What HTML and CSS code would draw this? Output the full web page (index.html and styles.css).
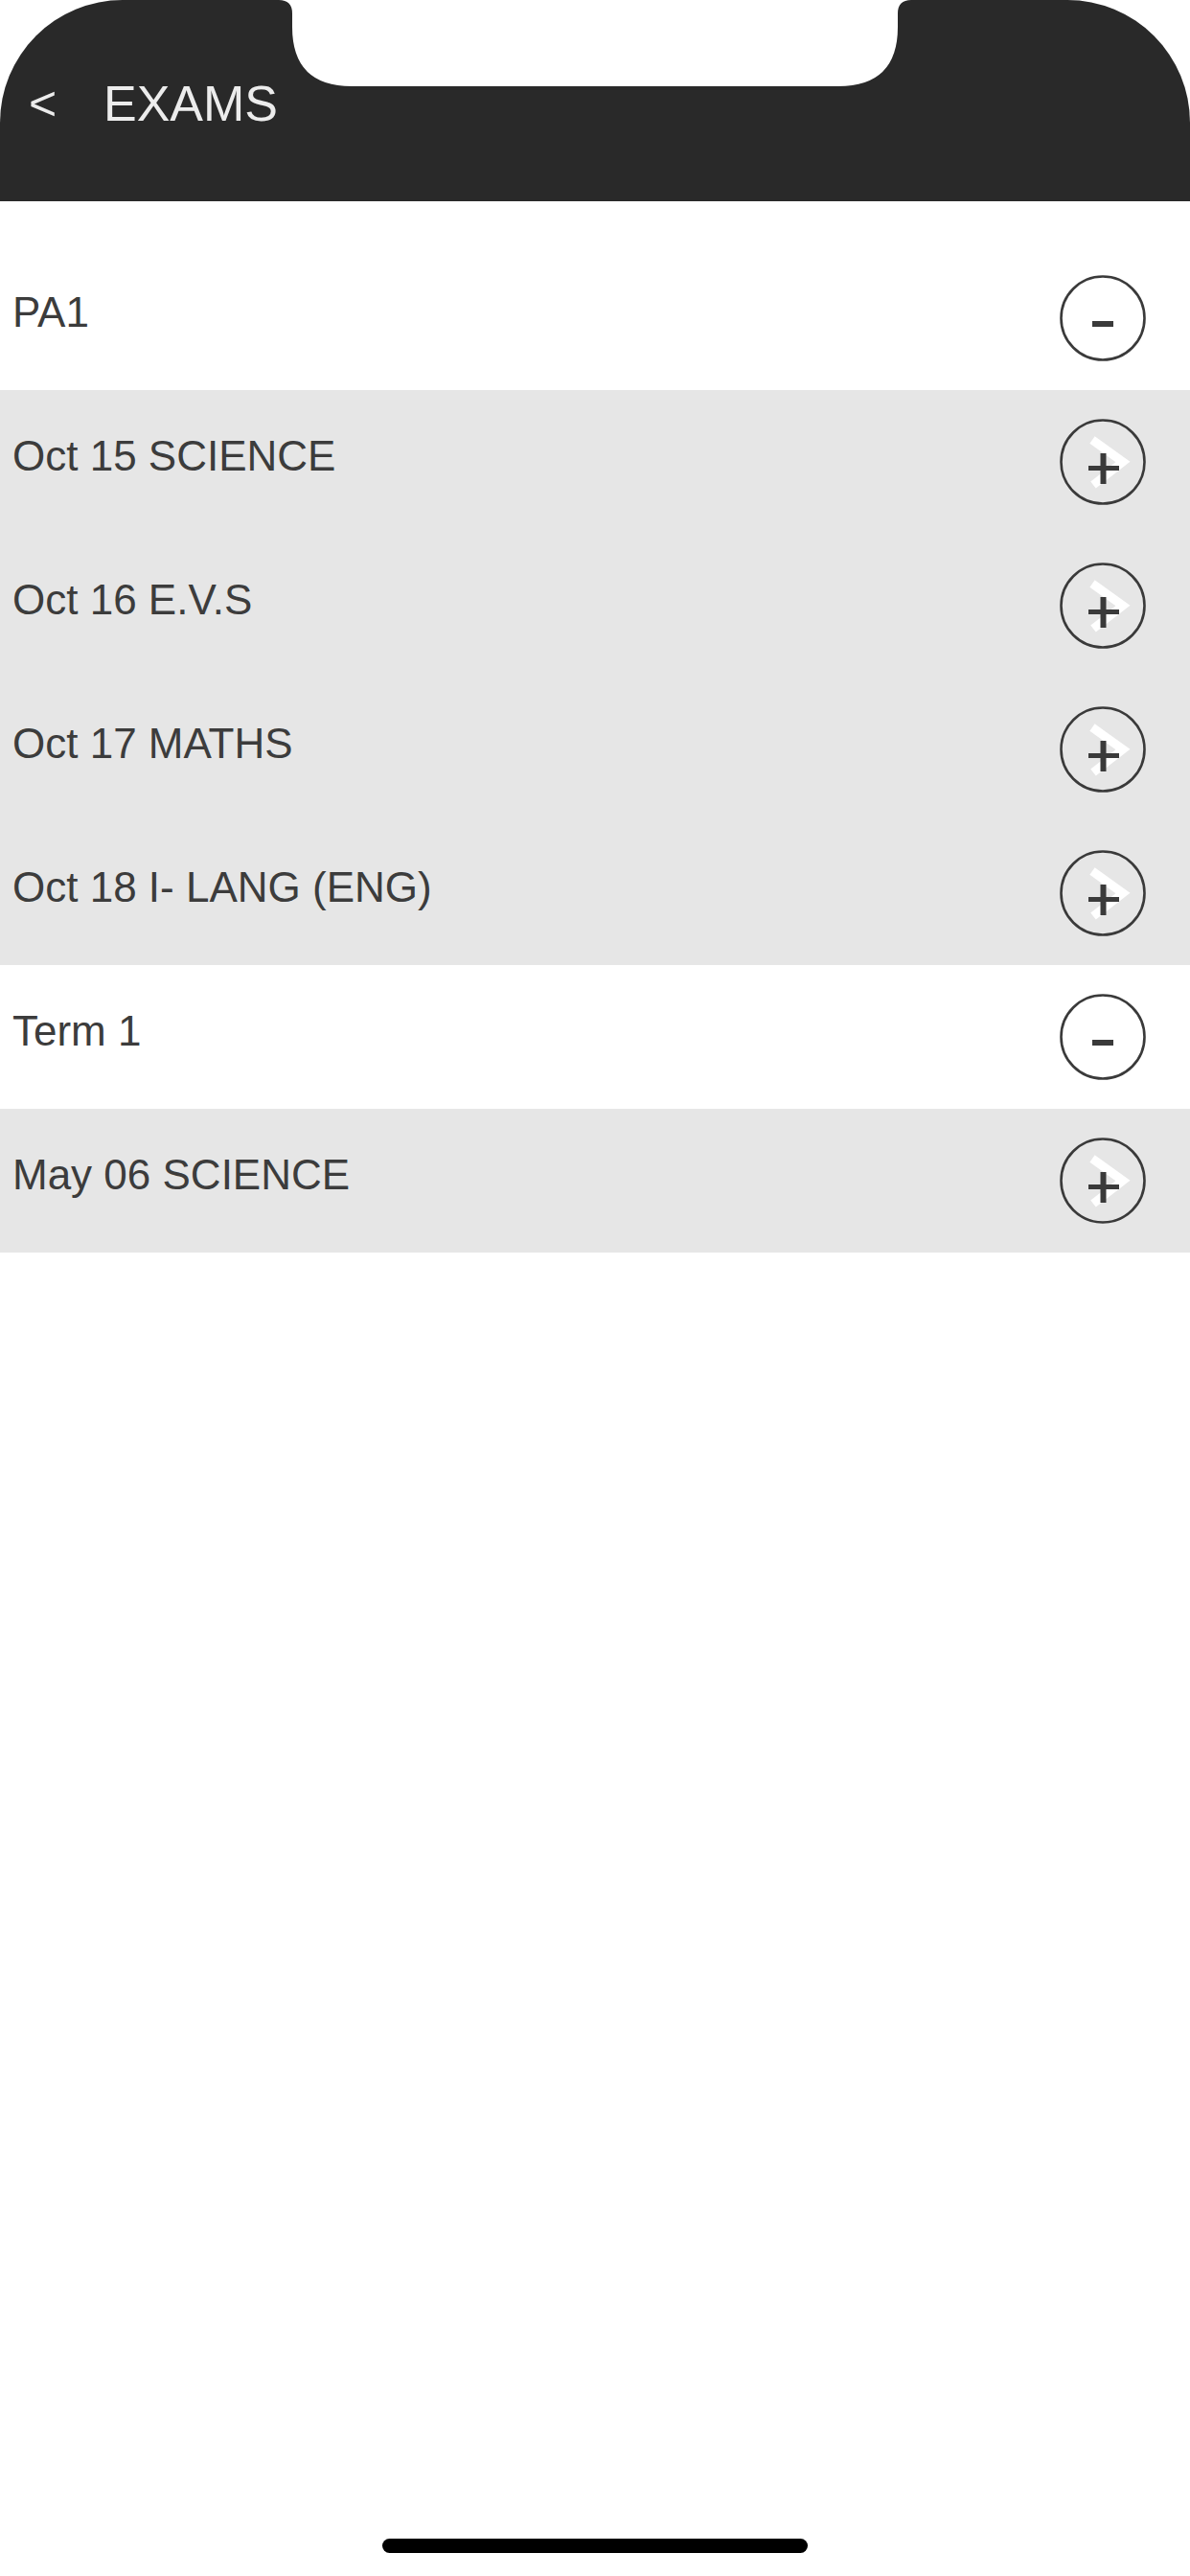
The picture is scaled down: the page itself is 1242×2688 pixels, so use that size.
FILE: index.html
```html
<!DOCTYPE html>
<html lang="en">
<head>
    <meta charset="UTF-8">
    <meta name="viewport" content="width=device-width, initial-scale=1.0">
    <title>Exams</title>
    <link rel="stylesheet" href="styles.css">
</head>
<body>
    <div class="screen">
        <header class="top-bar">
            <svg class="notch" width="660" height="90" viewBox="0 0 660 90">
                <path d="M0 0 Q14 0 14 14 L14 28 Q14 90 76 90 L584 90 Q646 90 646 28 L646 14 Q646 0 660 0 Z" fill="#fff"/>
            </svg>
            <span class="back">&lt;</span>
            <h1 class="title">EXAMS</h1>
        </header>

        <ul class="exam-list">
            <li class="row group">
                <span class="label">PA1</span>
                <svg class="toggle" viewBox="0 0 90 90"><circle cx="45" cy="45" r="43.5" fill="none" stroke="#3a3a3a" stroke-width="2.6"/><rect x="34" y="48" width="22" height="6" fill="#3a3a3a"/></svg>
            </li>
            <li class="row item">
                <span class="label">Oct 15 SCIENCE</span>
                <svg class="toggle" viewBox="0 0 90 90"><circle cx="45" cy="45" r="43.5" fill="none" stroke="#3a3a3a" stroke-width="2.6"/><polyline points="34,22 66,45 35,69" fill="none" stroke="#fff" stroke-width="9"/><rect x="30" y="49" width="32" height="5" fill="#3a3a3a"/><rect x="42.5" y="36" width="6" height="32" fill="#3a3a3a"/></svg>
            </li>
            <li class="row item">
                <span class="label">Oct 16 E.V.S</span>
                <svg class="toggle" viewBox="0 0 90 90"><circle cx="45" cy="45" r="43.5" fill="none" stroke="#3a3a3a" stroke-width="2.6"/><polyline points="34,22 66,45 35,69" fill="none" stroke="#fff" stroke-width="9"/><rect x="30" y="49" width="32" height="5" fill="#3a3a3a"/><rect x="42.5" y="36" width="6" height="32" fill="#3a3a3a"/></svg>
            </li>
            <li class="row item">
                <span class="label">Oct 17 MATHS</span>
                <svg class="toggle" viewBox="0 0 90 90"><circle cx="45" cy="45" r="43.5" fill="none" stroke="#3a3a3a" stroke-width="2.6"/><polyline points="34,22 66,45 35,69" fill="none" stroke="#fff" stroke-width="9"/><rect x="30" y="49" width="32" height="5" fill="#3a3a3a"/><rect x="42.5" y="36" width="6" height="32" fill="#3a3a3a"/></svg>
            </li>
            <li class="row item">
                <span class="label">Oct 18 I- LANG (ENG)</span>
                <svg class="toggle" viewBox="0 0 90 90"><circle cx="45" cy="45" r="43.5" fill="none" stroke="#3a3a3a" stroke-width="2.6"/><polyline points="34,22 66,45 35,69" fill="none" stroke="#fff" stroke-width="9"/><rect x="30" y="49" width="32" height="5" fill="#3a3a3a"/><rect x="42.5" y="36" width="6" height="32" fill="#3a3a3a"/></svg>
            </li>
            <li class="row group">
                <span class="label">Term 1</span>
                <svg class="toggle" viewBox="0 0 90 90"><circle cx="45" cy="45" r="43.5" fill="none" stroke="#3a3a3a" stroke-width="2.6"/><rect x="34" y="48" width="22" height="6" fill="#3a3a3a"/></svg>
            </li>
            <li class="row item">
                <span class="label">May 06 SCIENCE</span>
                <svg class="toggle" viewBox="0 0 90 90"><circle cx="45" cy="45" r="43.5" fill="none" stroke="#3a3a3a" stroke-width="2.6"/><polyline points="34,22 66,45 35,69" fill="none" stroke="#fff" stroke-width="9"/><rect x="30" y="49" width="32" height="5" fill="#3a3a3a"/><rect x="42.5" y="36" width="6" height="32" fill="#3a3a3a"/></svg>
            </li>
        </ul>

        <div class="home-indicator"></div>
    </div>
</body>
</html>
```

FILE: styles.css
```css
body {
    margin: 0;
    padding: 0;
    background: #fff;
    font-family: 'Liberation Sans', Arial, sans-serif;
}
.screen {
    width: 1242px;
    min-height: 2688px;
    display: flex;
    flex-direction: column;
    overflow: hidden;
}
.top-bar {
    position: relative;
    height: 210px;
    background: #292929;
    border-radius: 128px 128px 0 0;
    display: flex;
    align-items: flex-start;
    padding: 78px 0 0 30px;
    box-sizing: border-box;
    color: #ececec;
}
.notch {
    position: absolute;
    top: 0;
    left: 291px;
}
.back {
    font-size: 50px;
    line-height: 60px;
    width: 78px;
    font-weight: 300;
}
.title {
    margin: 0;
    font-size: 52px;
    font-weight: normal;
    line-height: 60px;
}
.exam-list {
    list-style: none;
    margin: 0;
    padding: 47px 0 0 0;
}
.row {
    height: 150px;
    display: flex;
    align-items: center;
    justify-content: space-between;
    padding: 0 46px 0 13px;
}
.group {
    background: #fff;
}
.item {
    background: #e6e6e6;
}
.label {
    font-size: 44px;
    color: #3c3c3c;
    padding-bottom: 13px;
}
.toggle {
    width: 90px;
    height: 90px;
    display: block;
}
.home-indicator {
    margin: auto auto 24px auto;
    width: 444px;
    height: 15px;
    border-radius: 8px;
    background: #000;
}
```
